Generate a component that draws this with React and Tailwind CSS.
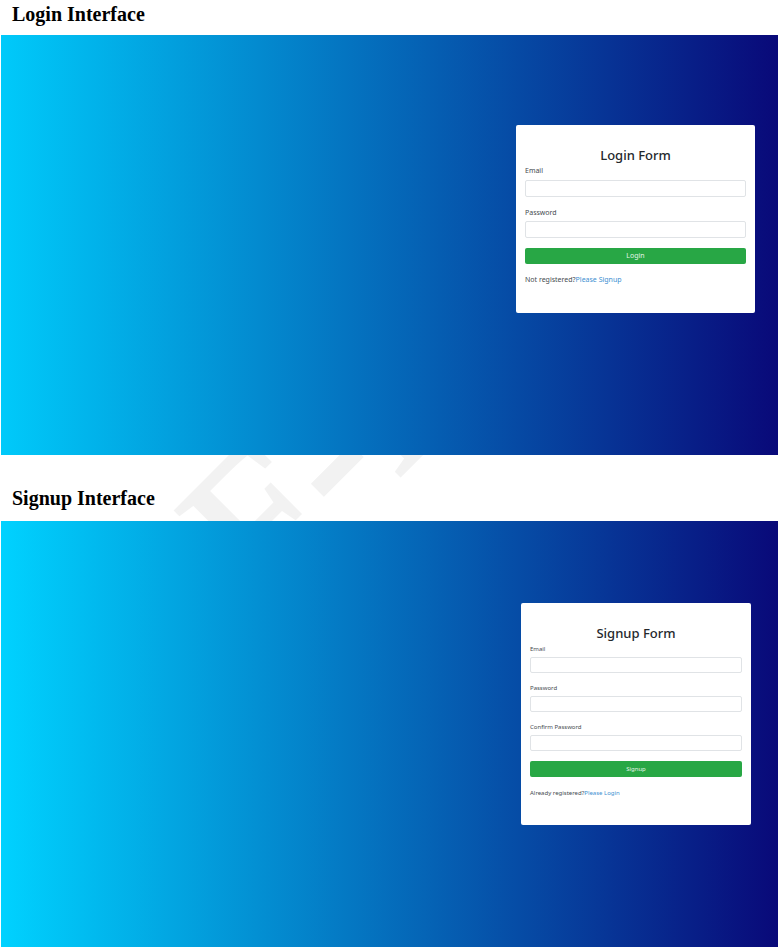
import { useId } from "react";

function Field({ label, type, size, inputClass }) {
  const id = useId();
  return (
    <div className="flex flex-col">
      <label htmlFor={id} className={`leading-3 ${size}`}>
        {label}
      </label>
      <input
        id={id}
        type={type}
        className={`w-full rounded-[2px] border border-[#e0e3e6] bg-white px-1 outline-none ${size} ${inputClass}`}
      />
    </div>
  );
}

function LoginForm() {
  return (
    <form
      onSubmit={(e) => e.preventDefault()}
      className="w-[239px] max-w-full rounded-[2px] bg-white px-[9px] pt-5 pb-[27px] text-[#454b50]"
    >
      <h2 className="text-center text-[13px] leading-5 font-medium text-[#24282c]">Login Form</h2>
      <div className="flex flex-col gap-[10px]">
        <Field label="Email" type="email" size="text-[7px]" inputClass="mt-[3px] h-[17px]" />
        <Field label="Password" type="password" size="text-[7px]" inputClass="mt-[2px] h-[17px]" />
        <button type="submit" className="h-4 w-full rounded-[2px] bg-[#28a745] text-[7px] leading-3 text-[#e6f5e9]">
          Login
        </button>
        <p className="text-[7px] leading-3">
          Not registered?
          <a href="#signup" className="text-[#3d8fd1]">Please Signup</a>
        </p>
      </div>
    </form>
  );
}

function SignupForm() {
  return (
    <form
      onSubmit={(e) => e.preventDefault()}
      className="w-[230px] max-w-full rounded-[2px] bg-white px-[9px] pt-5 pb-[26px] text-[#454b50]"
    >
      <h2 className="text-center text-[13px] leading-5 font-medium text-[#24282c]">Signup Form</h2>
      <div className="flex flex-col gap-[9px]">
        <Field label="Email" type="email" size="text-[6px]" inputClass="mt-[2px] h-4" />
        <Field label="Password" type="password" size="text-[6px]" inputClass="mt-[2px] h-4" />
        <Field label="Confirm Password" type="password" size="text-[6px]" inputClass="mt-[2px] h-4" />
      </div>
      <button type="submit" className="mt-[10px] block h-4 w-full rounded-[2px] bg-[#28a745] text-[6px] leading-3 text-[#e6f5e9]">
        Signup
      </button>
      <p className="mt-[10px] text-[6px] leading-3">
        Already registered?
        <a href="#login" className="text-[#3d8fd1]">Please Login</a>
      </p>
    </form>
  );
}

export default function App() {
  return (
    <main className="relative isolate overflow-hidden bg-white pr-[6px] pl-px font-['Noto_Sans','Open_Sans',sans-serif]">
      <span
        aria-hidden="true"
        className="absolute top-[353px] left-[174px] -z-10 -rotate-45 font-['Liberation_Serif',serif] text-[205px] leading-none whitespace-nowrap text-[#f2f2f2] [-webkit-text-stroke:3px_#f2f2f2]"
      >
        F-P
      </span>

      <section id="login">
        <h1 className="h-[35px] pt-[2px] pl-[11px] font-['Liberation_Serif',serif] text-[20px] leading-6 font-bold text-black">
          Login Interface
        </h1>
        <div className="flex justify-end bg-linear-to-r/srgb from-[#00cafa] to-[#090979] pt-[90px] pr-[23px] pb-[142px]">
          <LoginForm />
        </div>
      </section>

      <section id="signup">
        <h1 className="h-[66px] pt-[31px] pl-[11px] font-['Liberation_Serif',serif] text-[20px] leading-6 font-bold text-black">
          Signup Interface
        </h1>
        <div className="flex justify-end bg-linear-to-r/srgb from-[#00d2ff] to-[#090979] pt-[82px] pr-[27px] pb-[122px]">
          <SignupForm />
        </div>
      </section>
    </main>
  );
}
